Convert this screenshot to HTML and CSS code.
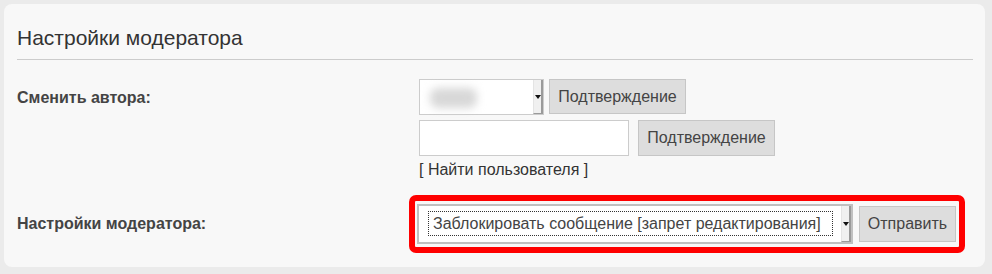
FILE: index.html
```html
<!DOCTYPE html>
<html lang="ru">
<head>
  <meta charset="UTF-8">
  <title>Настройки модератора</title>
  <link rel="stylesheet" href="styles.css">
</head>
<body>
  <div class="panel">
    <h2 class="panel-title">Настройки модератора</h2>

    <!-- change author -->
    <div class="row row-author">
      <div class="label">Сменить автора:</div>
      <div class="controls">
        <div class="line">
          <div class="fake-select author-select">
            <span class="blurred"></span>
            <span class="arrow"></span>
          </div>
          <button class="btn btn-confirm">Подтверждение</button>
        </div>
        <div class="line line-second">
          <input class="text-input" type="text">
          <button class="btn btn-confirm btn-tall">Подтверждение</button>
        </div>
        <a class="find-link">[ Найти пользователя ]</a>
      </div>
    </div>

    <!-- moderator actions -->
    <div class="row row-mod">
      <div class="label">Настройки модератора:</div>
      <div class="highlight">
        <div class="fake-select mod-select">
          <span class="option">Заблокировать сообщение [запрет редактирования]</span>
          <span class="arrow"></span>
        </div>
        <button class="btn btn-send btn-tall">Отправить</button>
      </div>
    </div>
  </div>
</body>
</html>
```

FILE: styles.css
```css
* {
  box-sizing: border-box;
}

body {
  margin: 0;
  padding: 4px 0 0 4px;
  background-color: #ebebeb;
  font-family: "Liberation Sans", Arial, sans-serif;
  color: #333;
}

.panel {
  width: 981px;
  height: 263px;
  background-color: #f8f8f8;
  border-radius: 8px;
  padding: 0 12px 0 13px;
}

.panel-title {
  margin: 0;
  padding: 22px 0 9px;
  font-size: 21px;
  font-weight: normal;
  line-height: 24px;
  color: #333;
  border-bottom: 1px solid #ccc;
}

.row {
  display: flex;
}

.label {
  flex: none;
  width: 402px;
  font-size: 16px;
  font-weight: bold;
  line-height: 18px;
  color: #444;
}

/* Row 1 */
.row-author {
  margin-top: 19px;
}

.row-author .label {
  padding-top: 10px;
}

.line {
  display: flex;
  gap: 5px;
}

.line-second {
  margin-top: 5px;
  gap: 9px;
}

.fake-select {
  display: flex;
  background-color: #fff;
}

.author-select {
  width: 125px;
  height: 36px;
  border: 1px solid #ccc;
  padding: 6px 0 4px 8px;
}

.blurred {
  flex: 1;
  margin: 2px 56px 2px 2px;
  background-color: #d8d8d8;
  border-radius: 8px;
  filter: blur(4px);
}

.arrow {
  flex: none;
  width: 10px;
  margin: -6px 0 -4px;
  background-color: #f0f0f0;
  border-left: 1px solid #e4e4e4;
  border-right: 2px solid #9a9a9a;
  border-bottom: 1px solid #9a9a9a;
  display: flex;
  align-items: center;
  justify-content: center;
}

.arrow::after {
  content: "";
  border-left: 3px solid transparent;
  border-right: 3px solid transparent;
  border-top: 4px solid #111;
}

.btn {
  height: 35px;
  padding: 0;
  background-color: #ddd;
  border: 1px solid #c6c6c6;
  font-family: "Liberation Sans", Arial, sans-serif;
  font-size: 16px;
  color: #444;
  text-align: center;
}

.btn-confirm {
  width: 137px;
}

.btn-send {
  width: 97px;
}

.btn-tall {
  height: 36px;
}

.text-input {
  width: 210px;
  height: 36px;
  border: 1px solid #ccc;
  background-color: #fff;
}

.find-link {
  display: block;
  margin-top: 5px;
  font-size: 16px;
  line-height: 18px;
  color: #333;
}

/* Row 2 */
.row-mod {
  margin-top: 16px;
  align-items: center;
}

.row-mod .label {
  width: 392px;
}

.highlight {
  display: flex;
  align-items: center;
  gap: 6px;
  border: 6px solid #f00;
  border-radius: 7px;
  padding: 3px 3px 3px 2px;
}

.mod-select {
  width: 436px;
  height: 40px;
  border: 2px solid #c0c0c0;
  padding: 5px 0 6px 9px;
}

.mod-select .arrow {
  margin: -5px 0 -6px 8px;
}

.option {
  flex: 1;
  border: 1px dotted #333;
  padding-left: 4px;
  font-size: 16px;
  line-height: 23px;
  color: #444;
  white-space: nowrap;
}
```
